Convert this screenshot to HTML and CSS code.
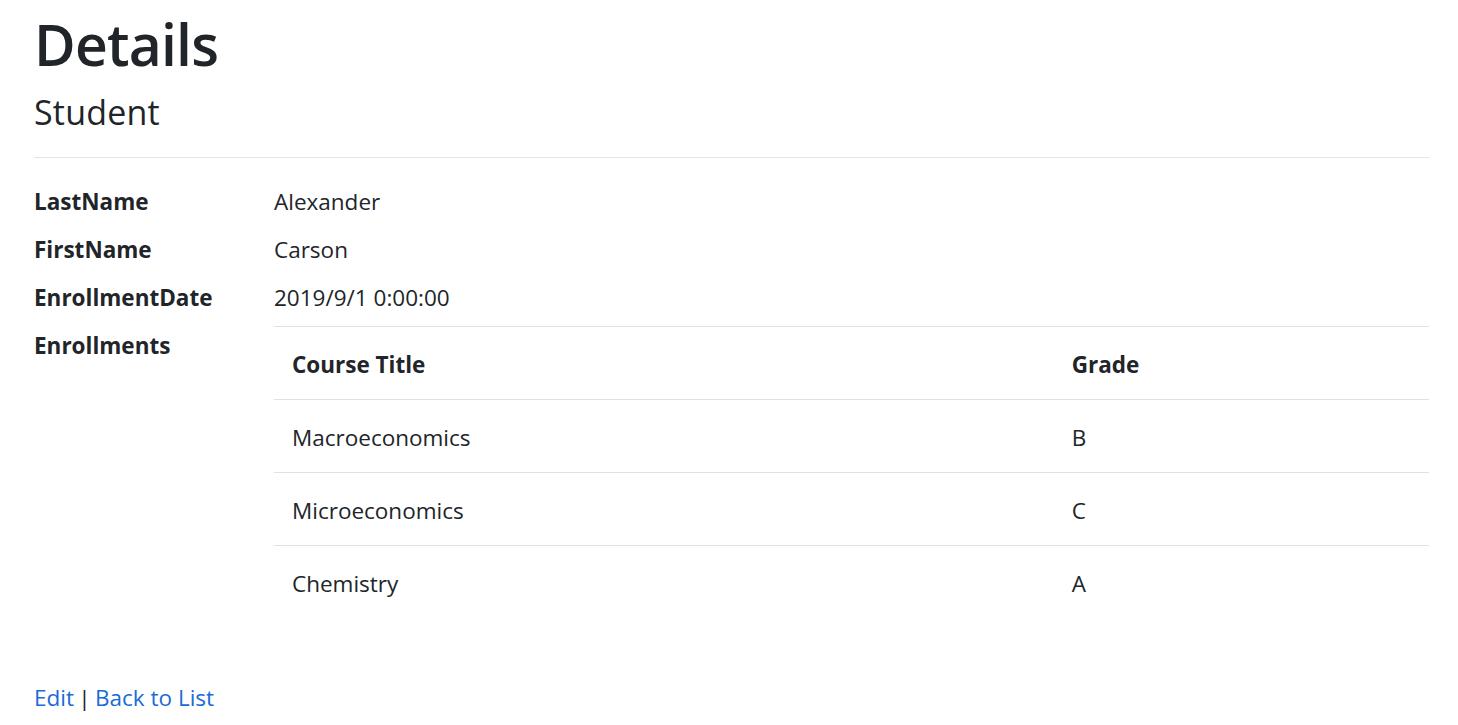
FILE: index.html
```html
<!DOCTYPE html>
<html lang="en">
<head>
<meta charset="utf-8">
<title>Details</title>
<link rel="stylesheet" href="styles.css">
</head>
<body>
<main class="page">
  <h1 class="title">Details</h1>
  <h4 class="subtitle">Student</h4>
  <hr class="rule">
  <dl class="details">
    <dt class="label">LastName</dt>
    <dd class="value">Alexander</dd>
    <dt class="label">FirstName</dt>
    <dd class="value">Carson</dd>
    <dt class="label">EnrollmentDate</dt>
    <dd class="value">2019/9/1 0:00:00</dd>
    <dt class="label">Enrollments</dt>
    <dd class="value">
      <table class="table">
        <thead>
          <tr><th class="col-title">Course Title</th><th>Grade</th></tr>
        </thead>
        <tbody>
          <tr><td>Macroeconomics</td><td>B</td></tr>
          <tr><td>Microeconomics</td><td>C</td></tr>
          <tr><td>Chemistry</td><td>A</td></tr>
        </tbody>
      </table>
    </dd>
  </dl>
  <div class="actions">
    <a class="link" href="#">Edit</a> | <a class="link" href="#">Back to List</a>
  </div>
</main>
</body>
</html>
```

FILE: styles.css
```css
html, body {
  margin: 0;
  padding: 0;
  background: #fff;
}

body {
  font-family: "Open Sans", "Noto Sans", "Liberation Sans", sans-serif;
  color: #212529;
  font-size: 22.5px;
  line-height: 36px;
}

.page {
  padding: 8px 29px 0 34px;
}

.title {
  margin: 0 0 11px;
  font-size: 57px;
  line-height: 72px;
  font-weight: 600;
  letter-spacing: -0.8px;
}

.subtitle {
  margin: 0;
  font-size: 34px;
  line-height: 43px;
  font-weight: 500;
  letter-spacing: 0.2px;
}

.rule {
  margin: 23px 0 26px;
  border: 0;
  border-top: 1px solid #e3e4e6;
  height: 0;
}

.details {
  display: grid;
  grid-template-columns: 240px 1fr;
  margin: 0 0 24px;
}

.label {
  font-weight: 700;
  margin: 0;
}

.value {
  margin: 0 0 12px;
}

.table {
  width: 100%;
  border-collapse: collapse;
  margin: -2px 0 26px;
}

.table th,
.table td {
  text-align: left;
  padding: 20px 18px 16px;
  border-top: 1px solid #dee2e6;
  vertical-align: top;
}

.table th {
  font-weight: 700;
}

.col-title {
  width: 67.5%;
}

.actions {
  line-height: 36px;
  word-spacing: -1.5px;
}

.link {
  color: #1a6bd6;
  text-decoration: none;
  word-spacing: 0;
}
```
